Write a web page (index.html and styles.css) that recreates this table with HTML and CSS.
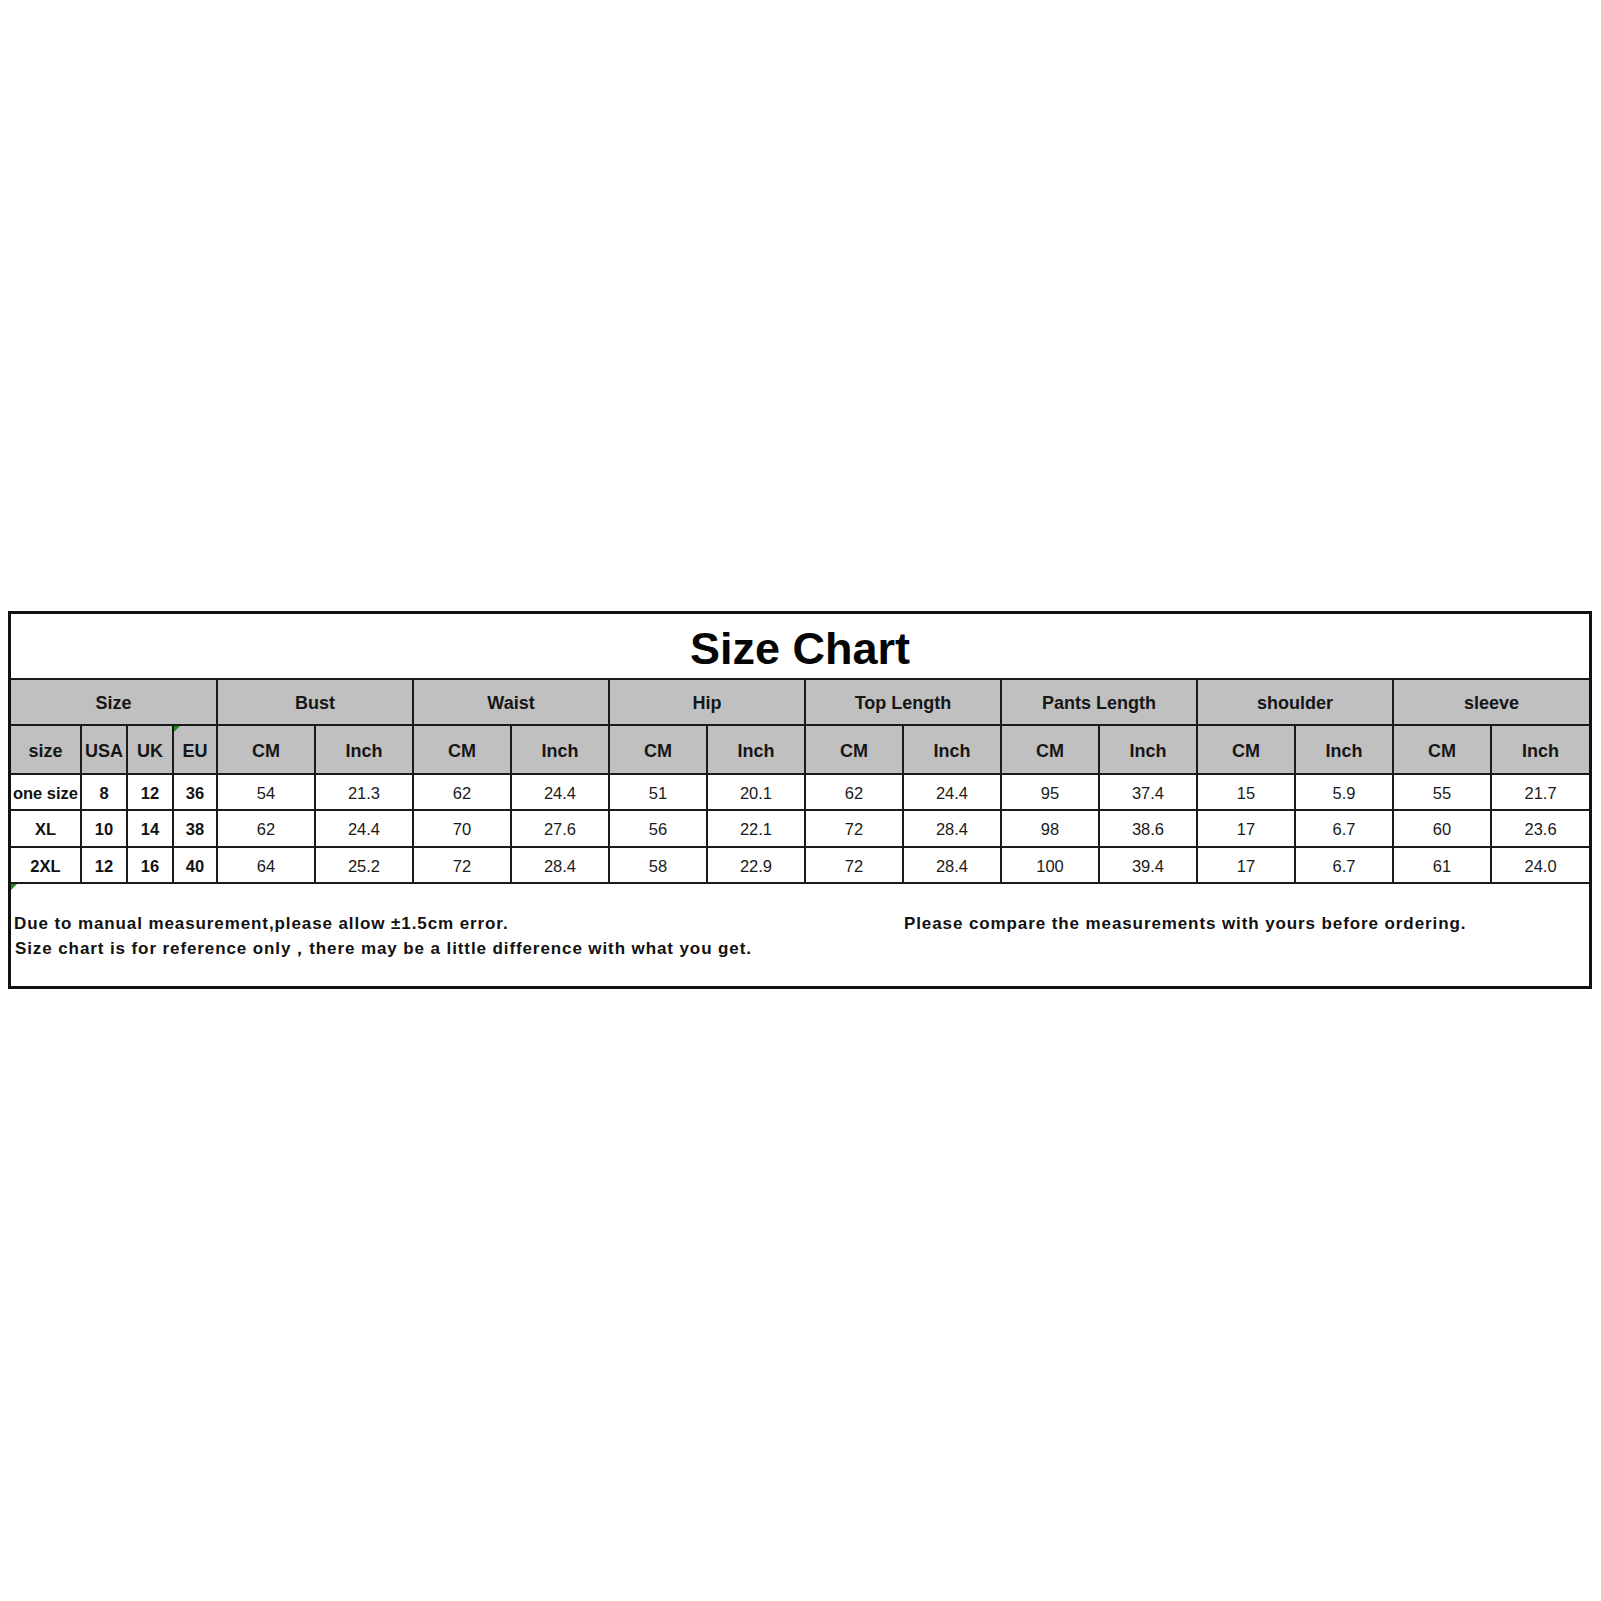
FILE: index.html
```html
<!DOCTYPE html>
<html>
<head>
<meta charset="utf-8">
<link rel="stylesheet" href="styles.css">
</head>
<body>
<main class="page">
  <div class="chart">
    <table class="size-table">
      <colgroup>
        <col class="c-size"><col class="c-usa"><col class="c-uk"><col class="c-eu">
        <col class="c-m"><col class="c-m"><col class="c-m"><col class="c-m">
        <col class="c-m"><col class="c-m"><col class="c-m"><col class="c-m">
        <col class="c-m"><col class="c-m"><col class="c-m"><col class="c-m">
        <col class="c-m"><col class="c-m">
      </colgroup>
      <tr class="title-row"><td colspan="18" class="title">Size Chart</td></tr>
      <tr class="head1">
        <th colspan="4">Size</th>
        <th colspan="2">Bust</th>
        <th colspan="2">Waist</th>
        <th colspan="2">Hip</th>
        <th colspan="2">Top Length</th>
        <th colspan="2">Pants Length</th>
        <th colspan="2">shoulder</th>
        <th colspan="2">sleeve</th>
      </tr>
      <tr class="head2">
        <th>size</th><th>USA</th><th>UK</th><th class="mark">EU</th>
        <th>CM</th><th>Inch</th><th>CM</th><th>Inch</th><th>CM</th><th>Inch</th>
        <th>CM</th><th>Inch</th><th>CM</th><th>Inch</th><th>CM</th><th>Inch</th>
        <th>CM</th><th>Inch</th>
      </tr>
      <tr class="row r1">
        <td class="b">one size</td><td class="b">8</td><td class="b">12</td><td class="b">36</td>
        <td>54</td><td>21.3</td><td>62</td><td>24.4</td><td>51</td><td>20.1</td>
        <td>62</td><td>24.4</td><td>95</td><td>37.4</td><td>15</td><td>5.9</td>
        <td>55</td><td>21.7</td>
      </tr>
      <tr class="row r2">
        <td class="b">XL</td><td class="b">10</td><td class="b">14</td><td class="b">38</td>
        <td>62</td><td>24.4</td><td>70</td><td>27.6</td><td>56</td><td>22.1</td>
        <td>72</td><td>28.4</td><td>98</td><td>38.6</td><td>17</td><td>6.7</td>
        <td>60</td><td>23.6</td>
      </tr>
      <tr class="row r3">
        <td class="b">2XL</td><td class="b">12</td><td class="b">16</td><td class="b">40</td>
        <td>64</td><td>25.2</td><td>72</td><td>28.4</td><td>58</td><td>22.9</td>
        <td>72</td><td>28.4</td><td>100</td><td>39.4</td><td>17</td><td>6.7</td>
        <td>61</td><td>24.0</td>
      </tr>
      <tr class="foot-row">
        <td colspan="18" class="foot mark">
          <div class="notes">
            <div class="note-left">
              <p>Due to manual measurement,please allow ±1.5cm error.</p>
              <p>Size chart is for reference only，there may be a little difference with what you get.</p>
            </div>
            <div class="note-right">
              <p>Please compare the measurements with yours before ordering.</p>
            </div>
          </div>
        </td>
      </tr>
    </table>
  </div>
</main>
</body>
</html>
```

FILE: styles.css
```css
html, body {
  margin: 0;
  padding: 0;
  background: #ffffff;
}

.page {
  padding: 611px 0 0 8px;
  width: 1584px;
  font-family: "Liberation Sans", Arial, sans-serif;
  color: #111111;
}

.chart {
  width: 1584px;
  box-sizing: border-box;
  border: 3px solid #111111;
}

.size-table {
  width: 1578px;
  table-layout: fixed;
  border-collapse: collapse;
  border-style: hidden;
}

.c-size { width: 70px; }
.c-usa { width: 46px; }
.c-uk { width: 46px; }
.c-eu { width: 44px; }
.c-m { width: 98px; }

.size-table td,
.size-table th {
  border: 2px solid #1a1a1a;
  padding: 0;
  text-align: center;
  vertical-align: middle;
  white-space: nowrap;
  overflow: hidden;
}

.title-row { height: 65px; }

.size-table .title {
  font-size: 45px;
  font-weight: bold;
  color: #050505;
  padding-top: 6px;
}

.head1 { height: 46px; }
.head2 { height: 49px; }

.size-table .head1 th,
.size-table .head2 th {
  background: #c0c0c0;
  font-size: 18px;
  font-weight: bold;
  color: #161616;
  padding-top: 2px;
}

.size-table .head2 th { padding-top: 3px; }

.r1 { height: 36px; }
.r2 { height: 37px; }
.r3 { height: 36px; }

.size-table .row td {
  font-size: 16.5px;
  font-weight: normal;
  color: #1a1a1a;
  padding-top: 2px;
}

.size-table .row td.b {
  font-weight: bold;
  color: #111111;
}

.foot-row { height: 103px; }

.size-table .foot {
  vertical-align: top;
  text-align: left;
}

.notes {
  display: grid;
  grid-template-columns: 890px 1fr;
  padding: 27px 0 0 3px;
  font-size: 17px;
  font-weight: bold;
  letter-spacing: 0.9px;
  line-height: 25px;
  color: #111111;
}

.notes p {
  margin: 0;
}

.note-left p + p {
  padding-left: 1px;
}

.mark {
  position: relative;
}

.mark::before {
  content: "";
  position: absolute;
  left: 0;
  top: 0;
  width: 0;
  height: 0;
  border-top: 6px solid #1f8a1f;
  border-right: 6px solid transparent;
}
```
